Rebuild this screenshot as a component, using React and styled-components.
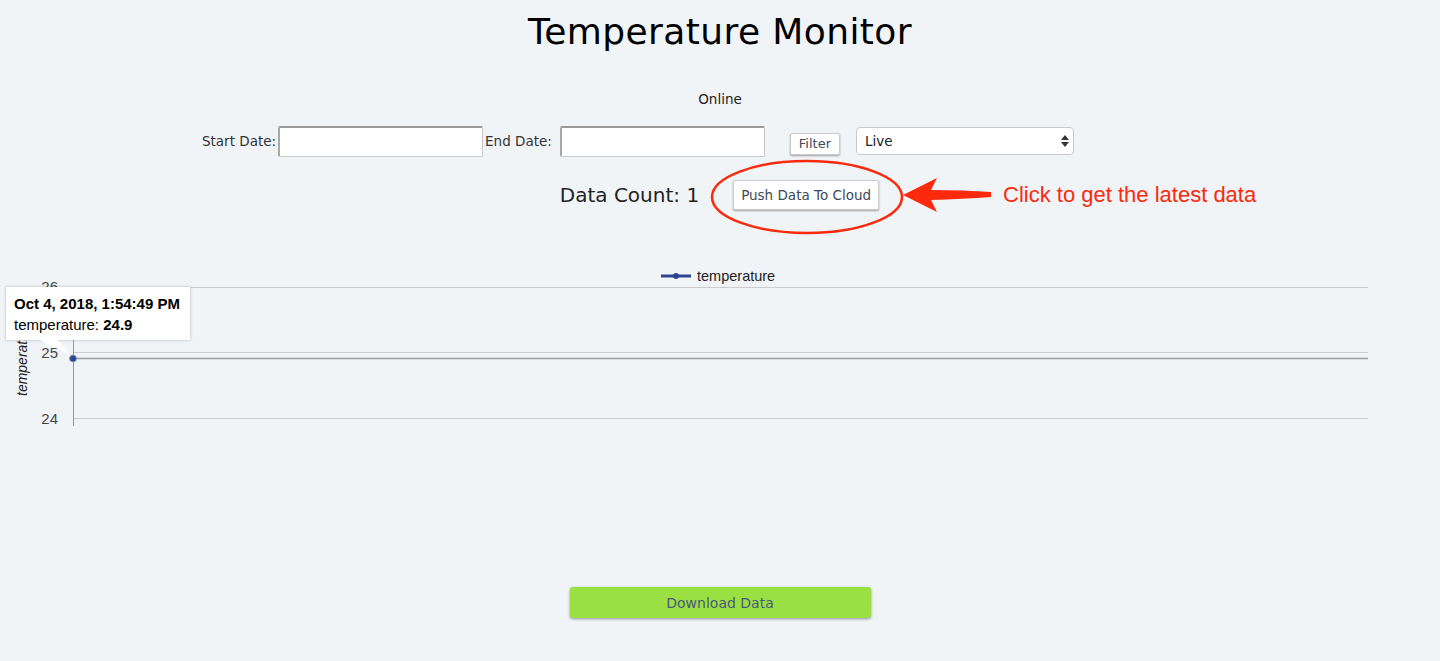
import React from 'react';
import styled, { createGlobalStyle } from 'styled-components';

const GlobalStyle = createGlobalStyle`
  html, body {
    margin: 0;
    padding: 0;
    background: #f0f4f7;
    font-family: "DejaVu Sans", "Open Sans", sans-serif;
    color: #222;
  }
`;

const Page = styled.div`
  width: 1440px;
  height: 661px;
  display: flex;
  flex-direction: column;
  align-items: center;
  overflow: hidden;
`;

const Title = styled.h1`
  margin: 10px 0 0;
  font-size: 36px;
  font-weight: 400;
  line-height: 44px;
  color: #000;
  letter-spacing: 0.4px;
`;

const Status = styled.div`
  margin-top: 36px;
  font-size: 13.5px;
  color: #222;
  line-height: 18px;
`;

const FilterRow = styled.div`
  display: flex;
  align-items: center;
  margin-top: 17px;
  height: 32px;
  margin-right: 164px;
`;

const Label = styled.label`
  font-size: 13.5px;
  color: #333;
  margin-right: ${p => p.$gap || 2}px;
`;

const DateInput = styled.input`
  box-sizing: border-box;
  width: 205px;
  height: 31px;
  border: 1px solid #c8c8c8;
  border-top: 2px solid #9a9a9a;
  border-left: 2px solid #a8a8a8;
  border-radius: 2px;
  background: #fff;
  margin-right: 2px;
`;

const SmallButton = styled.button`
  font-family: inherit;
  font-size: ${p => p.$size || 13}px;
  color: #3a4a5a;
  background: #fff;
  border: 1px solid #ccc;
  border-radius: 2px;
  box-shadow: 0 1px 2px rgba(0, 0, 0, 0.35);
  padding: 0 ${p => p.$px || 7}px;
  height: ${p => p.$h || 22}px;
  cursor: pointer;
`;

const SelectWrap = styled.div`
  position: relative;
  margin-left: 16px;
  width: 218px;
  height: 28px;
`;

const Select = styled.select`
  appearance: none;
  box-sizing: border-box;
  width: 100%;
  height: 100%;
  border: 1px solid #c9c9c9;
  border-radius: 4px;
  background: #fff;
  font-family: inherit;
  font-size: 13.5px;
  color: #222;
  padding: 0 8px;
`;

const SelectArrows = styled.svg`
  position: absolute;
  right: 5px;
  top: 8px;
  pointer-events: none;
`;

const PushRow = styled.div`
  display: flex;
  align-items: center;
  margin-top: 20px;
  position: relative;
  left: 188px;
`;

const Count = styled.div`
  font-size: 20px;
  color: #222;
  margin-right: 34px;
`;

const Highlight = styled.div`
  position: relative;
`;

const Ellipse = styled.svg`
  position: absolute;
  left: -24px;
  top: -22px;
  pointer-events: none;
`;

const Arrow = styled.svg`
  margin-left: 24px;
`;

const Callout = styled.div`
  font-family: "Liberation Sans", Arial, sans-serif;
  font-size: 22px;
  color: #fb2a0d;
  margin-left: 12px;
`;

const ChartArea = styled.div`
  position: relative;
  width: 1440px;
  margin-top: 52px;
  height: 180px;
`;

const Tooltip = styled.div`
  position: absolute;
  left: 6px;
  top: 22px;
  width: 184px;
  height: 53px;
  box-sizing: border-box;
  background: #fff;
  box-shadow: 0 0 3px rgba(0, 0, 0, 0.25);
  font-family: "Liberation Sans", Arial, sans-serif;
  font-size: 15px;
  color: #000;
  padding: 6px 8px;
  line-height: 21px;

  &::after {
    content: "";
    position: absolute;
    left: 34px;
    top: 53px;
    width: 30px;
    height: 15px;
    background: #fff;
    clip-path: polygon(0 0, 60% 0, 100% 100%);
    filter: drop-shadow(0 0 1px rgba(0, 0, 0, 0.3));
  }
`;

const TipTitle = styled.div`
  font-weight: 700;
`;

const Download = styled.button`
  margin-top: 142px;
  width: 301px;
  height: 31px;
  background: #9ae043;
  border: none;
  border-radius: 3px;
  box-shadow: 0 1px 3px rgba(0, 0, 0, 0.4);
  font-family: inherit;
  font-size: 14px;
  color: #4a5a7a;
  cursor: pointer;
`;

const Chart = () => (
  <svg width="1440" height="180" style={{ display: 'block' }}>
    <g transform="translate(0,-265)">
      <line x1="661" y1="276" x2="691" y2="276" stroke="#2b4590" strokeWidth="3" />
      <circle cx="676" cy="276" r="3" fill="#2b4590" />
      <text x="697" y="281" fontFamily="Liberation Sans, Arial, sans-serif" fontSize="14.5" fill="#222">temperature</text>
      <line x1="73" y1="287.5" x2="1368" y2="287.5" stroke="#cccccc" />
      <line x1="73" y1="352.5" x2="1368" y2="352.5" stroke="#cccccc" />
      <line x1="73" y1="418.5" x2="1368" y2="418.5" stroke="#cccccc" />
      <line x1="73" y1="358.5" x2="1368" y2="358.5" stroke="#9a9d9f" strokeWidth="1.5" />
      <line x1="73.5" y1="287" x2="73.5" y2="426" stroke="#999" />
      <g fontFamily="Liberation Sans, Arial, sans-serif" fontSize="15" fill="#444" textAnchor="end">
        <text x="58" y="292">26</text>
        <text x="58" y="358">25</text>
        <text x="58" y="424">24</text>
      </g>
      <text
        transform="translate(27,396) rotate(-90)"
        fontFamily="Liberation Sans, Arial, sans-serif"
        fontSize="14"
        fontStyle="italic"
        fill="#222"
      >
        temperature
      </text>
      <circle cx="73" cy="358.5" r="3.5" fill="#2b4590" stroke="#8ea0c8" strokeWidth="1" />
    </g>
  </svg>
);

export default function App() {
  return (
    <Page>
      <GlobalStyle />
      <Title>Temperature Monitor</Title>
      <Status>Online</Status>
      <FilterRow>
        <Label>Start Date:</Label>
        <DateInput type="text" />
        <Label $gap={8}>End Date:</Label>
        <DateInput type="text" />
        <SmallButton $px={8} style={{ marginLeft: 23, marginTop: 5 }}>Filter</SmallButton>
        <SelectWrap>
          <Select defaultValue="live">
            <option value="live">Live</option>
          </Select>
          <SelectArrows width="8" height="12" viewBox="0 0 8 12">
            <path d="M4 0 L8 5 H0 Z M4 12 L8 7 H0 Z" fill="#333" />
          </SelectArrows>
        </SelectWrap>
      </FilterRow>
      <PushRow>
        <Count>Data Count: 1</Count>
        <Highlight>
          <Ellipse width="196" height="78" viewBox="0 0 196 78">
            <ellipse cx="98" cy="39" rx="95" ry="36" fill="none" stroke="#fb2a0d" strokeWidth="2.5" />
          </Ellipse>
          <SmallButton $h={30} $size={13.5}>Push Data To Cloud</SmallButton>
        </Highlight>
        <Arrow width="88" height="36" viewBox="0 0 88 36">
          <path
            d="M0 18 L34 1 L28 13 Q60 13 88 15 L88 20 Q60 22 28 23 L34 35 Z"
            fill="#fb2a0d"
          />
        </Arrow>
        <Callout>Click to get the latest data</Callout>
      </PushRow>
      <ChartArea>
        <Chart />
        <Tooltip>
          <TipTitle>Oct 4, 2018, 1:54:49 PM</TipTitle>
          <div>
            temperature: <b>24.9</b>
          </div>
        </Tooltip>
      </ChartArea>
      <Download>Download Data</Download>
    </Page>
  );
}
